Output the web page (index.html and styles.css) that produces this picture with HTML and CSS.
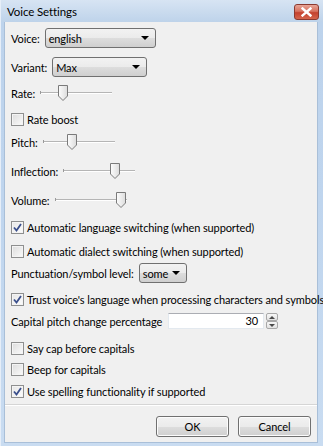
FILE: index.html
```html
<!DOCTYPE html>
<html>
<head>
<meta charset="utf-8">
<link rel="stylesheet" href="styles.css">
</head>
<body>
<div class="window">
  <div class="titlebar">
    <span class="title">Voice Settings</span>
    <div class="close">
      <svg width="11" height="10" viewBox="0 0 11 10"><path d="M1.5 1.5 L9.5 8.5 M9.5 1.5 L1.5 8.5" stroke="#ffffff" stroke-width="2.4" stroke-linecap="square"/></svg>
    </div>
  </div>
  <div class="client">
    <div class="content">
      <div class="row r-voice">
        <span class="label">Voice:</span>
        <div class="combo w-voice"><span>english</span><i class="arrow"></i></div>
      </div>
      <div class="row r-variant">
        <span class="label">Variant:</span>
        <div class="combo w-variant"><span>Max</span><i class="arrow"></i></div>
      </div>
      <div class="row r-rate">
        <span class="label">Rate:</span>
        <div class="slider"><div class="track"></div><div class="tick"></div><svg class="thumb" style="left:18px" width="10" height="16" viewBox="0 0 10 16"><defs><linearGradient id="tg1" x1="0" y1="0" x2="1" y2="0"><stop offset="0" stop-color="#fdfdfd"/><stop offset="1" stop-color="#dcdcdc"/></linearGradient></defs><path d="M0.5 0.5 H9.5 V11 L5 15.5 L0.5 11 Z" fill="url(#tg1)" stroke="#7a7a7a"/></svg></div>
      </div>
      <div class="row r-boost">
        <span class="check"></span><span class="ctext">Rate boost</span>
      </div>
      <div class="row r-pitch">
        <span class="label">Pitch:</span>
        <div class="slider"><div class="track"></div><div class="tick"></div><svg class="thumb" style="left:24px" width="10" height="16" viewBox="0 0 10 16"><path d="M0.5 0.5 H9.5 V11 L5 15.5 L0.5 11 Z" fill="url(#tg1)" stroke="#7a7a7a"/></svg></div>
      </div>
      <div class="row r-infl">
        <span class="label">Inflection:</span>
        <div class="slider"><div class="track"></div><div class="tick"></div><svg class="thumb" style="left:47px" width="10" height="16" viewBox="0 0 10 16"><path d="M0.5 0.5 H9.5 V11 L5 15.5 L0.5 11 Z" fill="url(#tg1)" stroke="#7a7a7a"/></svg></div>
      </div>
      <div class="row r-vol">
        <span class="label">Volume:</span>
        <div class="slider"><div class="track"></div><div class="tick"></div><svg class="thumb" style="left:61px" width="10" height="16" viewBox="0 0 10 16"><path d="M0.5 0.5 H9.5 V11 L5 15.5 L0.5 11 Z" fill="url(#tg1)" stroke="#7a7a7a"/></svg></div>
      </div>
      <div class="row r-lang">
        <span class="check checked"><svg width="9" height="9" viewBox="0 0 9 9"><path d="M1 4.5 L3.5 7.5 L8 1" fill="none" stroke="#3a4f8c" stroke-width="1.8"/></svg></span><span class="ctext">Automatic language switching (when supported)</span>
      </div>
      <div class="row r-dial">
        <span class="check"></span><span class="ctext">Automatic dialect switching (when supported)</span>
      </div>
      <div class="row r-punct">
        <span class="label">Punctuation/symbol level:</span>
        <div class="combo w-punct"><span>some</span><i class="arrow"></i></div>
      </div>
      <div class="row r-trust">
        <span class="check checked"><svg width="9" height="9" viewBox="0 0 9 9"><path d="M1 4.5 L3.5 7.5 L8 1" fill="none" stroke="#3a4f8c" stroke-width="1.8"/></svg></span><span class="ctext">Trust voice's language when processing characters and symbols</span>
      </div>
      <div class="row r-cap">
        <span class="label">Capital pitch change percentage</span>
        <div class="spin">
          <div class="spinfield">30</div>
          <div class="spinbtns">
            <div class="sb"><i class="up"></i></div>
            <div class="sb"><i class="down"></i></div>
          </div>
        </div>
      </div>
      <div class="row r-say">
        <span class="check"></span><span class="ctext">Say cap before capitals</span>
      </div>
      <div class="row r-beep">
        <span class="check"></span><span class="ctext">Beep for capitals</span>
      </div>
      <div class="row r-spell">
        <span class="check checked"><svg width="9" height="9" viewBox="0 0 9 9"><path d="M1 4.5 L3.5 7.5 L8 1" fill="none" stroke="#3a4f8c" stroke-width="1.8"/></svg></span><span class="ctext">Use spelling functionality if supported</span>
      </div>
    </div>
    <div class="sep"></div>
    <div class="buttons">
      <div class="btn">OK</div>
      <div class="btn">Cancel</div>
    </div>
  </div>
</div>
</body>
</html>
```

FILE: styles.css
```css
* { box-sizing: border-box; }
html, body { margin: 0; padding: 0; }
body {
  width: 323px;
  height: 446px;
  overflow: hidden;
  font-family: Lato, "Noto Sans", sans-serif;
  font-size: 11px;
  letter-spacing: -0.1px;
  color: #000;
}
.window {
  width: 323px;
  height: 446px;
  background: linear-gradient(to bottom, #c3d7ee 0px, #bdd3ec 22px, #bfd5ee 200px, #c9dcf1 446px);
  display: flex;
  flex-direction: column;
  border-left: 1px solid #e6eef8;
}
.titlebar {
  height: 22px;
  flex: none;
  display: flex;
  align-items: center;
  justify-content: space-between;
  padding: 0 4px 0 6px;
  background: linear-gradient(to bottom, #d7e4f3, #bed3ea);
}
.title {
  color: #000;
  font-size: 11.5px;
  margin-top: 1px;
}
.close {
  width: 25px;
  height: 16px;
  margin-top: 1px;
  border: 1px solid #8b3a30;
  border-radius: 3px;
  background: linear-gradient(to bottom, #e8a597 0%, #d7725f 45%, #c4412e 55%, #d5654c 100%);
  display: flex;
  align-items: center;
  justify-content: center;
}
.client {
  flex: 1;
  margin: 0 5px 3px 3px;
  background: #f0f0f0;
  border: 1px solid #a9bfd8;
  border-top: none;
  display: flex;
  flex-direction: column;
}
.content {
  padding: 6px 0 0 6px;
  display: flex;
  flex-direction: column;
}
.row {
  height: 20px;
  display: flex;
  align-items: center;
  white-space: nowrap;
}
.r-variant { margin-top: 9px; }
.r-rate { margin-top: 6px; }
.r-boost { margin-top: 6px; }
.r-pitch { margin-top: 3px; }
.r-infl { margin-top: 9px; }
.r-vol { margin-top: 9px; }
.r-lang { margin-top: 7px; }
.r-dial { margin-top: 4px; }
.r-punct { margin-top: 2px; }
.r-trust { margin-top: 6px; }
.r-cap { margin-top: 2px; }
.r-say { margin-top: 7px; }
.r-beep { margin-top: 1px; }
.r-spell { margin-top: 2px; }

.label { margin-right: 5px; }

.combo {
  height: 20px;
  border: 1px solid #707070;
  border-radius: 3px;
  background: linear-gradient(to bottom, #f2f2f2 0%, #ebebeb 50%, #dddddd 51%, #cfcfcf 100%);
  display: flex;
  align-items: center;
  justify-content: space-between;
  padding: 0 6px 0 3px;
}
.w-voice { width: 111px; }
.w-variant { width: 95px; }
.w-punct { width: 48px; }
.arrow {
  width: 0;
  height: 0;
  border-left: 4px solid transparent;
  border-right: 4px solid transparent;
  border-top: 4px solid #000;
}

.slider {
  position: relative;
  width: 72px;
  height: 20px;
}
.track {
  position: absolute;
  left: 0;
  right: 0;
  top: 9px;
  height: 2px;
  border-top: 1px solid #b5b5b5;
  border-bottom: 1px solid #ffffff;
}
.tick {
  position: absolute;
  left: 0;
  top: 8px;
  width: 1px;
  height: 3px;
  background: #9a9a9a;
}
.thumb {
  position: absolute;
  top: 2px;
}

.check {
  width: 13px;
  height: 13px;
  border: 1px solid #8e8f8f;
  background: linear-gradient(135deg, #dcdcdc, #fbfbfb);
  box-shadow: inset 0 0 0 1px #f4f4f4;
  display: flex;
  align-items: center;
  justify-content: center;
  margin-left: 0;
  margin-right: 3px;
  flex: none;
}
.check.checked { background: linear-gradient(135deg, #e6e6e6, #fdfdfd); }

.spin {
  display: flex;
  align-items: center;
  margin-left: 1px;
}
.spinfield {
  width: 96px;
  height: 16px;
  background: #fff;
  border: 1px solid #e3e9ef;
  border-top-color: #abadb3;
  text-align: right;
  padding-right: 5px;
  line-height: 14px;
}
.spinbtns {
  display: flex;
  flex-direction: column;
  margin-left: 2px;
}
.sb {
  width: 12px;
  height: 8px;
  border: 1px solid #a8a8a8;
  border-radius: 2px;
  background: linear-gradient(to bottom, #f7f7f7, #e2e2e2);
  display: flex;
  align-items: center;
  justify-content: center;
}
.sb .up {
  border-left: 3px solid transparent;
  border-right: 3px solid transparent;
  border-bottom: 3px solid #4a4a4a;
}
.sb .down {
  border-left: 3px solid transparent;
  border-right: 3px solid transparent;
  border-top: 3px solid #4a4a4a;
}

.sep {
  margin-top: 3px;
  height: 2px;
  border-top: 1px solid #d5d5d5;
  border-bottom: 1px solid #ffffff;
}
.buttons {
  display: flex;
  justify-content: flex-end;
  gap: 9px;
  padding: 10px 6px 0 0;
}
.btn {
  width: 73px;
  height: 21px;
  border: 1px solid #707070;
  border-radius: 3px;
  background: linear-gradient(to bottom, #f2f2f2 0%, #ebebeb 50%, #dddddd 51%, #cfcfcf 100%);
  box-shadow: inset 0 0 0 1px #fcfcfc;
  display: flex;
  align-items: center;
  justify-content: center;
}
```
